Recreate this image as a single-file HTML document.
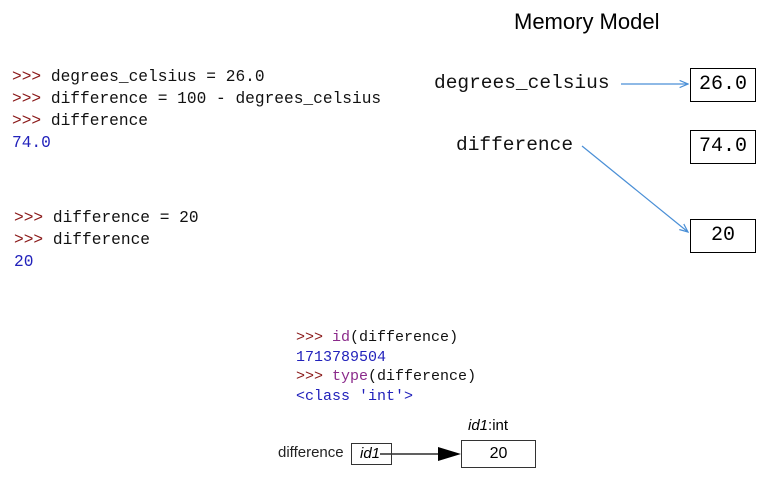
<!DOCTYPE html>
<html><head><style>
body{margin:0;width:764px;height:482px;background:#fff;position:relative;overflow:hidden;font-family:"Liberation Sans",sans-serif}
.m{position:absolute;font-family:"Liberation Mono","DejaVu Sans Mono",monospace;white-space:pre;color:#111}
.p{color:#8b1a1a}
.b{color:#2222bb}
.f{color:#8b2a8b}
.box{position:absolute;border:1.5px solid #000;box-sizing:border-box;text-align:center;font-family:"Liberation Mono",monospace;font-size:20px}
.a{position:absolute;}
</style></head><body>
<div class="m" style="left:12px;top:66px;font-size:16.2px;line-height:22px"><span class="p">&gt;&gt;&gt;</span> degrees_celsius = 26.0
<span class="p">&gt;&gt;&gt;</span> difference = 100 - degrees_celsius
<span class="p">&gt;&gt;&gt;</span> difference
<span class="b">74.0</span></div>
<div class="m" style="left:14px;top:207px;font-size:16.2px;line-height:22px"><span class="p">&gt;&gt;&gt;</span> difference = 20
<span class="p">&gt;&gt;&gt;</span> difference
<span class="b">20</span></div>
<div style="position:absolute;left:514px;top:9px;font-size:22px">Memory Model</div>
<div class="m" style="left:434px;top:72px;font-size:19.5px">degrees_celsius</div>
<div class="m" style="left:456px;top:134px;font-size:19.5px">difference</div>
<div class="box" style="left:690px;top:68px;width:66px;height:34px;line-height:31px">26.0</div>
<div class="box" style="left:690px;top:130px;width:66px;height:34px;line-height:31px">74.0</div>
<div class="box" style="left:690px;top:219px;width:66px;height:34px;line-height:31px">20</div>
<svg class="a" style="left:0;top:0" width="764" height="482">
<defs><marker id="h" markerWidth="8" markerHeight="8" refX="7" refY="4" orient="auto"><path d="M0,1 L7,4 L0,7" fill="none" stroke="#4a8fd6" stroke-width="1"/></marker></defs>
<line x1="621" y1="84" x2="688" y2="84" stroke="#4a8fd6" stroke-width="1.2" marker-end="url(#h)"/>
<line x1="582" y1="146" x2="688" y2="232" stroke="#4a8fd6" stroke-width="1.2" marker-end="url(#h)"/>
<line x1="380" y1="454" x2="440" y2="454" stroke="#000" stroke-width="1.2"/>
<path d="M438,447 L461,454 L438,461 Z" fill="#000"/>
</svg>
<div class="m" style="left:296px;top:328px;font-size:15px;line-height:19.7px"><span class="p">&gt;&gt;&gt;</span> <span class="f">id</span>(difference)
<span class="b">1713789504</span>
<span class="p">&gt;&gt;&gt;</span> <span class="f">type</span>(difference)
<span class="b">&lt;class 'int'&gt;</span></div>
<div style="position:absolute;left:278px;top:444px;font-size:15px;color:#222">difference</div>
<div style="position:absolute;left:351px;top:443px;width:41px;height:22px;border:1px solid #333;box-sizing:border-box;font-size:15px;font-style:italic;line-height:20px;padding-left:8px">id1</div>
<div style="position:absolute;left:461px;top:440px;width:75px;height:28px;border:1px solid #333;box-sizing:border-box;font-size:16px;line-height:26px;text-align:center">20</div>
<div style="position:absolute;left:468px;top:417px;font-size:15px"><i>id1</i>:int</div>
</body></html>
